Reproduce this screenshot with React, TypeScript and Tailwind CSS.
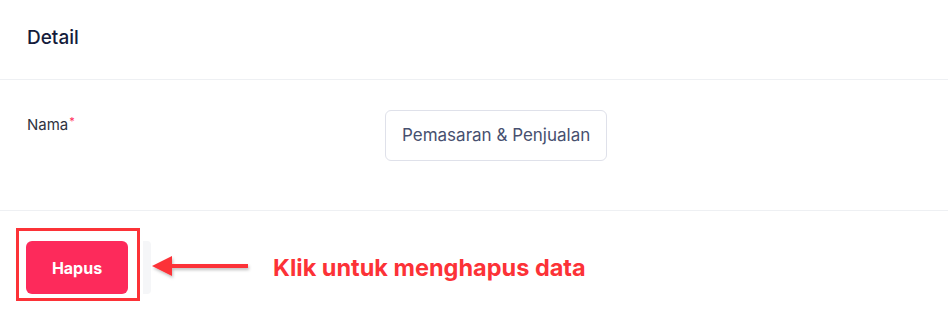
import React from 'react'

const font = { fontFamily: 'Inter, "Noto Sans", sans-serif' }

function Arrow() {
  return (
    <svg width="104" height="30" viewBox="0 0 104 30" className="block">
      <defs>
        <filter id="sh" x="-10%" y="-40%" width="130%" height="200%">
          <feDropShadow dx="1" dy="2" stdDeviation="1.5" floodColor="#000" floodOpacity="0.25" />
        </filter>
      </defs>
      <g filter="url(#sh)">
        <rect x="20" y="11" width="78" height="4" fill="#fc3237" />
        <polygon points="2,13 22,3 22,23" fill="#fc3237" />
      </g>
    </svg>
  )
}

export default function App() {
  return (
    <div className="w-[948px] h-[318px] bg-white overflow-hidden" style={font}>
      {/* header */}
      <div className="h-[80px] px-[27px] flex items-center border-b border-[#eef0f3]">
        <h2 className="text-[19px] font-medium text-[#141c3b] leading-none -mt-[4px]">Detail</h2>
      </div>

      {/* form */}
      <div className="h-[131px] pl-[27px] pt-[30px] flex border-b border-[#eef0f3]">
        <div className="w-[358px] pt-[2px]">
          <label className="text-[15px] text-[#2f3340] leading-[20px]">
            Nama<sup className="text-[#ff2a5b] text-[11px] ml-[1px]">*</sup>
          </label>
        </div>
        <div className="w-[222px] h-[51px] border border-[#dfe1ea] rounded-[6px] flex items-center pl-[16px] overflow-hidden">
          <span className="text-[17px] text-[#47506f] whitespace-nowrap">Pemasaran &amp; Penjualan</span>
        </div>
      </div>

      {/* actions */}
      <div className="pl-[16px] pt-[17px] flex items-start">
        <div className="border-[3px] border-[#fc3237] pt-[10px] pb-[4px] pl-[7px] pr-[9px]">
          <button className="w-[102px] h-[53px] rounded-[6px] bg-[#fd2a5b] text-white font-bold text-[16px]">
            Hapus
          </button>
        </div>
        <div className="mt-[13px] w-[8px] h-[53px] bg-[#f5f6f8] rounded-r-[4px] ml-[3px]" />
        <div className="mt-[25px] -ml-[1px]">
          <Arrow />
        </div>
        <span className="mt-[28px] ml-[19px] text-[23.5px] font-bold text-[#fc3237] leading-none whitespace-nowrap">
          Klik untuk menghapus data
        </span>
      </div>
    </div>
  )
}
